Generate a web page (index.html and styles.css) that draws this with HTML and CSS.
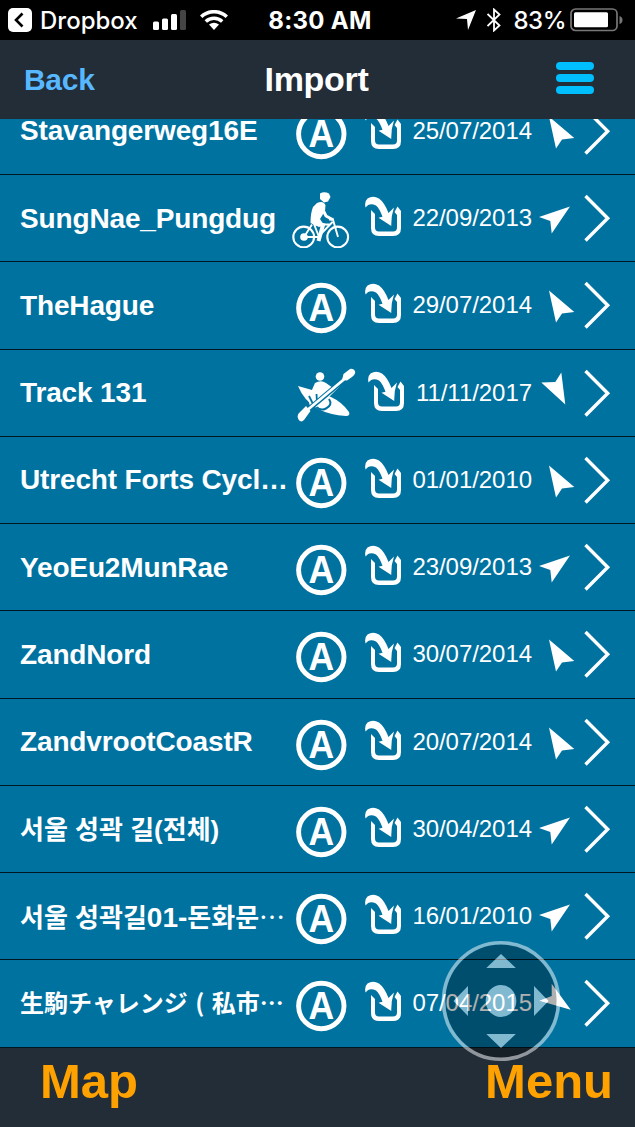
FILE: index.html
```html
<!DOCTYPE html>
<html lang="en">
<head>
    <meta charset="UTF-8">
    <title>Import</title>
    <link rel="stylesheet" href="styles.css">
</head>
<body>
    <!-- Status bar -->
    <div class="status">
        <div class="status-left">
            <svg width="24" height="24" viewBox="0 0 24 24"><rect width="24" height="24" rx="5" fill="#fff"/><path d="M14.500 5.500L8 12l6.500 6.500" fill="none" stroke="#000" stroke-width="2.600"/></svg>
            <span class="app">Dropbox</span>
            <svg class="signal" width="33" height="20" viewBox="0 0 33 20"><g fill="#fff"><rect y="11.500" width="6" height="8.500" rx="1.500"/><rect x="9" y="8.500" width="6" height="11.500" rx="1.500"/><rect x="18" y="4" width="6" height="16" rx="1.500"/></g><rect x="27" width="6" height="20" rx="1.500" fill="#444"/></svg>
            <svg class="wifi" width="28" height="20" viewBox="0 0 28 20"><g fill="none" stroke="#fff" stroke-width="3.500"><path d="M1.200 6.800a18.500 18.500 0 0 1 25.600 0"/><path d="M5.800 11.500a12 12 0 0 1 16.400 0"/></g><path d="M9 14.600q5-3.800 10 0L14 20z" fill="#fff"/></svg>
        </div>
        <div class="time">8:30 AM</div>
        <div class="status-right">
            <svg width="20" height="20" viewBox="0 0 20 20"><path d="M20 0L12 20l-1-11L0 8.500z" fill="#fff"/></svg>
            <svg class="bluetooth" width="14" height="24" viewBox="0 0 14 24"><path d="M.5 6l12 11.500L7 22.500v-21l5.500 5L.5 18" fill="none" stroke="#fff" stroke-width="1.800"/></svg>
            <span class="percent">83%</span>
            <svg width="53" height="24" viewBox="0 0 53 24"><rect x="1" y="1" width="46" height="21.500" rx="4.500" fill="none" stroke="#777" stroke-width="1.700"/><rect x="4" y="4.200" width="34" height="15" rx="1.500" fill="#fff"/><path d="M49.500 8q3 1 3 4t-3 4z" fill="#777"/></svg>
        </div>
    </div>

    <!-- Title bar -->
    <div class="header">
        <span class="back">Back</span>
        <span class="title">Import</span>
        <div class="burger"><i></i><i></i><i></i></div>
    </div>

    <!-- Icons shared by the rows -->
    <svg class="defs">
        <symbol id="auto" viewBox="0 0 61 60">
            <circle cx="29.300" cy="33" r="22.700" fill="none" stroke="#fff" stroke-width="4.900"/>
            <text transform="translate(29.300 46.300) scale(.91 1)" text-anchor="middle" class="letter">A</text>
        </symbol>
        <symbol id="bike" viewBox="0 0 61 60">
            <g fill="none" stroke="#fff">
                <circle cx="11.700" cy="49" r="10.400" stroke-width="2.100"/>
                <circle cx="45.700" cy="49" r="10.400" stroke-width="2.100"/>
                <path d="M12 49L20 36.500M12 49H26L40.500 34M22 36.500H38M22 36L27 49M40.500 30L46 49M37 31.500H41.500" stroke-width="1.900"/>
                <path d="M31 22L34 28L40.500 31.500" stroke-width="3"/>
                <path d="M21 34L31 37L26.500 53" stroke-width="4"/>
            </g>
            <circle cx="12" cy="49" r="3.800" fill="#fff"/>
            <path d="M28 5.500Q32 3 37 5.500L38.500 9L36 13.500L32 14.500L28 11z" fill="#fff"/>
            <path d="M25 15Q31 12 33.500 17L33 23L28 31L32 37L27 39L18.500 35Q18.500 25 21 19z" fill="#fff"/>
        </symbol>
        <symbol id="kayak" viewBox="0 0 61 60">
            <path d="M3 23L17 27L36 34Q47 39 54 49Q55.500 53 51 53Q35 52 23 46Q9 38 3 23z" fill="#fff"/>
            <path d="M21 43Q25 48.500 31 45.500Q38 42 34 36" fill="none" stroke="#0072a0" stroke-width="2"/>
            <circle cx="25" cy="13.500" r="4.300" fill="#fff"/>
            <path d="M20 20Q26 16.500 31 20L38 25L46 22L34 34L22 44L15 43L13 36z" fill="#fff"/>
            <path d="M21.500 31L22 39.500L34 30M14 33L18 41" fill="none" stroke="#0072a0" stroke-width="1.800"/>
            <path d="M14 46L45 20" stroke="#0072a0" stroke-width="5"/>
            <path d="M10 49L50 15.500" stroke="#fff" stroke-width="2.800"/>
            <path d="M47 17L48.500 11L55 6Q58 5 60 8Q61 11 57 14L52 17.500zM11 43L15.500 48L9 57Q6 60 3.500 56.500Q1.500 53 4 50z" fill="#fff"/>
        </symbol>
        <symbol id="import" viewBox="0 0 36 60">
            <path d="M6 22L10 26V39.500Q10 43.500 14 43.500H28Q32 43.500 32 39.500V27L29.500 24L32.500 18.500L36 23V40Q36 48 28 48H14Q6 48 6 40z" fill="#fff"/>
            <path d="M.5 19.500Q-.8 13.500 2.500 10.500Q8 7 14 10.500Q19.500 14.500 23.500 25L29 19.500Q26 28 26.300 38L13.500 29.700L17.500 28.700Q14.500 20.500 11 17.500Q4.500 14 .5 19.500z" fill="#fff"/>
        </symbol>
        <symbol id="nw" viewBox="0 0 48 60"><path d="M17 15.600L42.300 36.900L30 38.500L24 47.600z" fill="#fff"/></symbol>
        <symbol id="ne" viewBox="0 0 48 60"><path d="M38 18.400L19.700 45.400L18.300 33L7 29z" fill="#fff"/></symbol>
        <symbol id="south" viewBox="0 0 48 60"><path d="M33.300 41.600L9.300 19.600L23.300 19L29.300 9.600z" fill="#fff"/></symbol>
        <symbol id="se" viewBox="0 0 48 60"><path d="M38.700 36.800L7.300 27.800L19.700 23V10.800z" fill="#fff"/></symbol>
        <symbol id="more" viewBox="0 0 32 60"><path d="M5.500 8L27.700 30.300L5.500 52.500" fill="none" stroke="#fff" stroke-width="3.400"/></symbol>
    </svg>

    <!-- Track list -->
    <div class="list">
        <div class="row">
            <span class="name">Stavangerweg16E</span>
            <svg class="activity"><use href="#auto"/></svg><svg class="import"><use href="#import"/></svg>
            <span class="date">25/07/2014</span>
            <svg class="heading"><use href="#nw"/></svg><svg class="more"><use href="#more"/></svg>
        </div>
        <div class="row">
            <span class="name">SungNae_Pungdug</span>
            <svg class="activity"><use href="#bike"/></svg><svg class="import"><use href="#import"/></svg>
            <span class="date">22/09/2013</span>
            <svg class="heading"><use href="#ne"/></svg><svg class="more"><use href="#more"/></svg>
        </div>
        <div class="row">
            <span class="name">TheHague</span>
            <svg class="activity"><use href="#auto"/></svg><svg class="import"><use href="#import"/></svg>
            <span class="date">29/07/2014</span>
            <svg class="heading"><use href="#nw"/></svg><svg class="more"><use href="#more"/></svg>
        </div>
        <div class="row">
            <span class="name">Track 131</span>
            <svg class="activity"><use href="#kayak"/></svg><svg class="import"><use href="#import"/></svg>
            <span class="date">11/11/2017</span>
            <svg class="heading"><use href="#south"/></svg><svg class="more"><use href="#more"/></svg>
        </div>
        <div class="row">
            <span class="name">Utrecht Forts Cycl…</span>
            <svg class="activity"><use href="#auto"/></svg><svg class="import"><use href="#import"/></svg>
            <span class="date">01/01/2010</span>
            <svg class="heading"><use href="#nw"/></svg><svg class="more"><use href="#more"/></svg>
        </div>
        <div class="row">
            <span class="name">YeoEu2MunRae</span>
            <svg class="activity"><use href="#auto"/></svg><svg class="import"><use href="#import"/></svg>
            <span class="date">23/09/2013</span>
            <svg class="heading"><use href="#ne"/></svg><svg class="more"><use href="#more"/></svg>
        </div>
        <div class="row">
            <span class="name">ZandNord</span>
            <svg class="activity"><use href="#auto"/></svg><svg class="import"><use href="#import"/></svg>
            <span class="date">30/07/2014</span>
            <svg class="heading"><use href="#nw"/></svg><svg class="more"><use href="#more"/></svg>
        </div>
        <div class="row">
            <span class="name">ZandvrootCoastR</span>
            <svg class="activity"><use href="#auto"/></svg><svg class="import"><use href="#import"/></svg>
            <span class="date">20/07/2014</span>
            <svg class="heading"><use href="#nw"/></svg><svg class="more"><use href="#more"/></svg>
        </div>
        <div class="row">
            <span class="name korean" lang="ko">서울 성곽 길(전체)</span>
            <svg class="activity"><use href="#auto"/></svg><svg class="import"><use href="#import"/></svg>
            <span class="date">30/04/2014</span>
            <svg class="heading"><use href="#ne"/></svg><svg class="more"><use href="#more"/></svg>
        </div>
        <div class="row">
            <span class="name korean" lang="ko">서울 성곽길<span class="latin">01-</span>돈화문<span class="dots">…</span></span>
            <svg class="activity"><use href="#auto"/></svg><svg class="import"><use href="#import"/></svg>
            <span class="date">16/01/2010</span>
            <svg class="heading"><use href="#ne"/></svg><svg class="more"><use href="#more"/></svg>
        </div>
        <div class="row">
            <span class="name japanese" lang="ja">生駒チャレンジ<span class="paren">(</span>私市…</span>
            <svg class="activity"><use href="#auto"/></svg><svg class="import"><use href="#import"/></svg>
            <span class="date">07/04/2015</span>
            <svg class="heading"><use href="#se"/></svg><svg class="more"><use href="#more"/></svg>
        </div>
    </div>

    <div class="footer">
        <span>Map</span>
        <span>Menu</span>
    </div>

    <!-- Floating pan control: the dark disc is cut out under the light shapes -->
    <svg class="joystick" viewBox="0 0 120 122">
        <defs>
            <g id="pads">
                <ellipse cx="60" cy="61" rx="15.300" ry="16"/>
                <path d="M60 14L74.800 28H45.300zM60 108L74.800 94H45.300zM12.500 61L27 46V76zM107.500 61L93 46V76z"/>
            </g>
            <mask id="cutout">
                <rect width="120" height="122" fill="#fff"/>
                <use href="#pads" fill="#000"/>
            </mask>
        </defs>
        <ellipse cx="60" cy="61" rx="55.700" ry="56.500" fill="#000" fill-opacity=".31" mask="url(#cutout)"/>
        <use href="#pads" fill="#fff" fill-opacity=".5"/>
        <ellipse cx="60" cy="61" rx="57.500" ry="58.300" fill="none" stroke="#fff" stroke-opacity=".5" stroke-width="3.600"/>
    </svg>
</body>
</html>
```
FILE: styles.css
```css
body {
    margin: 0;
    width: 635px;
    height: 1127px;
    overflow: hidden;
    display: flex;
    flex-direction: column;
    position: relative;
    background: #222d38;
    color: #fff;
    font-family: "Liberation Sans", Arial, sans-serif;
}
svg {
    flex: none;
    display: block;
}
.defs {
    display: none;
}
.status {
    height: 40px;
    box-sizing: border-box;
    padding: 0 12px 0 8px;
    display: grid;
    grid-template-columns: 1fr auto 1fr;
    align-items: center;
    background: #000;
    font-family: Inter, sans-serif;
    font-size: 24px;
    font-weight: 500;
}
.status-left, .status-right {
    display: flex;
    align-items: center;
}
.status-right {
    justify-content: flex-end;
}
.app {
    margin: 0 15px 0 8px;
}
.wifi {
    margin-left: 14px;
}
.time {
    padding-left: 9px;
    font-weight: 700;
    letter-spacing: .3px;
}
.bluetooth {
    margin: 0 13px 0 11px;
}
.percent {
    margin-right: 4px;
    letter-spacing: -.5px;
}
.header {
    height: 79px;
    box-sizing: border-box;
    padding: 0 41px 0 24px;
    display: grid;
    grid-template-columns: 1fr auto 1fr;
    align-items: center;
    font-weight: bold;
}
.back {
    color: #58b8ff;
    font-size: 30px;
    letter-spacing: -.3px;
}
.title {
    padding-left: 15px;
    font-size: 34px;
    letter-spacing: -.3px;
}
.burger {
    justify-self: end;
    display: grid;
    gap: 4px;
    margin-bottom: 3px;
}
.burger i {
    width: 38px;
    height: 8px;
    border-radius: 4px;
    background: #00bfff;
}
.list {
    height: 928.500px;
    overflow: hidden;
    display: flex;
    flex-direction: column;
    justify-content: flex-end;
}
.row {
    flex: none;
    height: 87.250px;
    box-sizing: border-box;
    padding: 0 23px 0 20px;
    border-bottom: 1px solid #001620;
    display: flex;
    align-items: center;
    background: #0072a0;
}
.name {
    flex: 1;
    width: 0;
    padding-top: 1px;
    white-space: nowrap;
    font-size: 28px;
    font-weight: bold;
    letter-spacing: -.15px;
}
.korean {
    padding: 0 0 2px;
    font-family: "Liberation Sans", "Noto Sans CJK KR", sans-serif;
    font-size: 26px;
    letter-spacing: 0;
}
.latin {
    font-size: 28px;
}
.dots {
    font-family: "Noto Sans CJK KR", sans-serif;
    font-weight: normal;
    line-height: 1;
}
.japanese {
    padding: 0 0 3px;
    font-family: "Noto Sans CJK JP", sans-serif;
    font-size: 24px;
    letter-spacing: 0;
}
.paren {
    display: inline-block;
    width: 24px;
    text-align: center;
}
.letter {
    font: bold 39px "Liberation Sans", Arial, sans-serif;
    fill: #fff;
}
.activity {
    width: 61px;
    height: 60px;
    margin-right: 12px;
}
.import {
    width: 36px;
    height: 60px;
    margin-right: 11.500px;
}
.date {
    font-size: 24px;
    letter-spacing: -.05px;
}
.heading {
    width: 48px;
    height: 60px;
}
.more {
    width: 32px;
    height: 60px;
}
.footer {
    flex: 1;
    padding: 5px 22px 0 40px;
    display: flex;
    justify-content: space-between;
    color: #ffa200;
    font-size: 49px;
    font-weight: bold;
}
.joystick {
    position: absolute;
    left: 441px;
    top: 940px;
    width: 120px;
    height: 122px;
}
```
